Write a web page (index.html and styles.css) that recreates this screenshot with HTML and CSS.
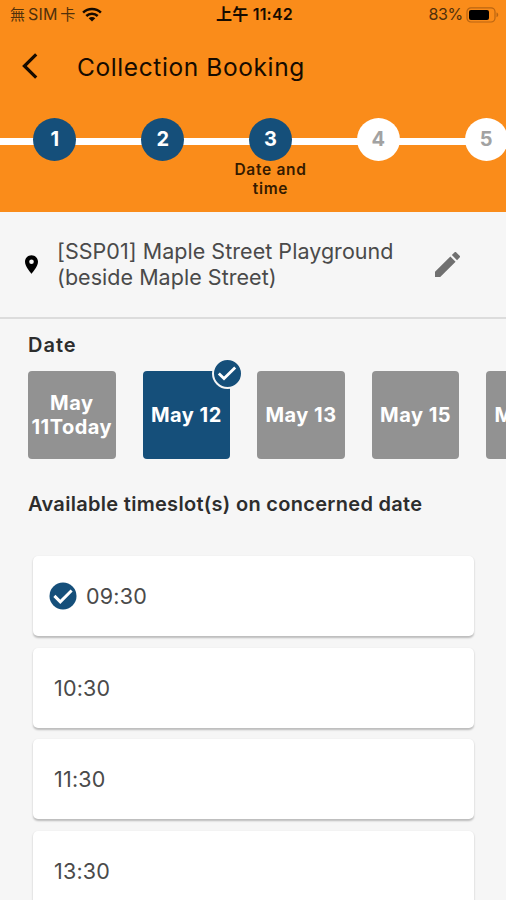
FILE: index.html
```html
<!DOCTYPE html>
<html lang="en">
<head>
<meta charset="utf-8">
<meta name="viewport" content="width=device-width, initial-scale=1">
<title>Collection Booking</title>
<link rel="stylesheet" href="styles.css">
</head>
<body>
<div class="screen">
  <header class="header">
    <div class="status">
      <div class="status-left">
        <span class="carrier">無<span class="sim">SIM</span>卡</span>
        <svg class="wifi" viewBox="0 0 20 15" width="20" height="15" fill="none" stroke="#160b00" stroke-width="2.5">
          <path d="M1.1 5.6A12.7 12.7 0 0 1 18.9 5.6"/>
          <path d="M4.3 9A8.1 8.1 0 0 1 15.7 9"/>
          <path d="M10 14.4L6.7 11.3A4.7 4.7 0 0 1 13.3 11.3Z" fill="#160b00" stroke="none"/>
        </svg>
      </div>
      <div class="status-time">上午 11:42</div>
      <div class="status-right">
        <span class="percent">83%</span>
        <svg class="battery" viewBox="0 0 33 16" width="33" height="16">
          <rect x="1" y=".8" width="28" height="14.2" rx="4" fill="none" stroke="#b96512" stroke-width="1.2"/>
          <rect x="3" y="2.9" width="20" height="10" rx="2" fill="#000"/>
          <path d="M30.5 5.6C32.8 6.3 32.8 9.5 30.5 10.2Z" fill="#b96512"/>
        </svg>
      </div>
    </div>
    <div class="titlebar">
      <svg class="back" viewBox="0 0 16 26" width="16" height="26" fill="none" stroke="#160b00" stroke-width="3.2"><path d="M14.2 1.4L2.4 13L14.2 24.6"/></svg>
      <h1 class="title">Collection Booking</h1>
    </div>
    <ol class="steps">
      <li class="step done"><span class="dot">1</span></li>
      <li class="step done"><span class="dot">2</span></li>
      <li class="step done"><span class="dot">3</span><span class="label">Date and time</span></li>
      <li class="step"><span class="dot">4</span></li>
      <li class="step"><span class="dot">5</span></li>
    </ol>
  </header>

  <section class="place">
    <svg class="pin" viewBox="5 2 14 20" width="13" height="19"><path d="M12 2C8.13 2 5 5.13 5 9c0 5.25 7 13 7 13s7-7.75 7-13c0-3.87-3.13-7-7-7zm0 9.5a2.5 2.5 0 0 1 0-5 2.5 2.5 0 0 1 0 5z"/></svg>
    <p class="address">[SSP01] Maple Street Playground<br>(beside Maple Street)</p>
    <svg class="edit" viewBox="3 3 18 18" width="25" height="25" fill="#707070"><path d="M3 17.25V21h3.75L17.81 9.94l-3.75-3.75L3 17.25zM20.71 7.04a1 1 0 0 0 0-1.41l-2.34-2.34a1 1 0 0 0-1.41 0l-1.83 1.83 3.75 3.75 1.83-1.83z"/></svg>
  </section>

  <section class="dates">
    <h2 class="heading date-heading">Date</h2>
    <div class="date-row">
      <div class="date">May<br>11Today</div>
      <div class="date selected">May 12
        <span class="badge"><svg viewBox="0 0 26 26" width="26" height="26" fill="none" stroke="#fff" stroke-width="2.8"><path d="M4.8 13.4L10 18.6L21.2 7.4"/></svg></span>
      </div>
      <div class="date">May 13</div>
      <div class="date">May 15</div>
      <div class="date">May 16</div>
    </div>
  </section>

  <section class="times">
    <h2 class="heading slot-heading">Available timeslot(s) on concerned date</h2>
    <ul class="slots">
      <li class="slot chosen">
        <svg class="check" viewBox="0 0 28 28" width="28" height="28"><circle cx="14" cy="14" r="13.5" fill="#154f7a"/><path d="M5.4 13.9L11.3 19.8L22.6 8.5" fill="none" stroke="#fff" stroke-width="3"/></svg>
        <span>09:30</span>
      </li>
      <li class="slot">10:30</li>
      <li class="slot">11:30</li>
      <li class="slot">13:30</li>
    </ul>
  </section>
</div>
</body>
</html>
```
FILE: styles.css
```css
* { box-sizing: border-box; }
body {
  margin: 0;
  background: #fff;
  font-family: Inter, "Noto Sans CJK TC", sans-serif;
  color: #2d2d2d;
}
h1, h2, p, ul, ol { margin: 0; padding: 0; list-style: none; }
svg { display: block; flex: none; }
.screen {
  width: 506px;
  height: 900px;
  overflow: hidden;
  background: #f6f6f6;
}
.header {
  height: 211.5px;
  background: #fa8c1a;
  color: #160b00;
}
.status {
  display: grid;
  grid-template-columns: 1fr auto 1fr;
  align-items: center;
  height: 29px;
  padding: 0 7px 0 10px;
  font-size: 16px;
  line-height: 29px;
  white-space: nowrap;
}
.status-left { display: flex; align-items: center; gap: 7px; color: #50300b; }
.carrier { font-size: 15px; }
.sim { margin: 0 2.5px 0 3px; font-size: 16px; letter-spacing: .2px; }
.status-time { font-weight: 600; font-size: 16px; letter-spacing: .2px; }
.status-right { display: flex; align-items: center; justify-content: flex-end; gap: 3px; color: #50300b; }
.percent { letter-spacing: -.3px; }
.titlebar {
  display: flex;
  align-items: center;
  height: 74px;
  padding-left: 22px;
}
.title {
  margin: 1px 0 0 39px;
  font-size: 24.5px;
  font-weight: 400;
  letter-spacing: .6px;
  line-height: 32px;
  white-space: nowrap;
}
.steps {
  display: flex;
  width: 540px;
  padding-top: 14.5px;
  margin-left: 1px;
}
.step {
  flex: 0 0 107.8px;
  display: flex;
  flex-direction: column;
  align-items: center;
  background: linear-gradient(#fff, #fff) 0 20px / 100% 7px no-repeat;
}
.step:first-child { margin-left: -1px; padding-left: 1px; flex-basis: 108.8px; }
.dot {
  width: 43px;
  height: 43px;
  border-radius: 50%;
  background: #fff;
  color: #a2a2a2;
  font-size: 20px;
  font-weight: 700;
  line-height: 43px;
  text-align: center;
}
.done .dot { background: #154f7a; color: #fff; }
.label {
  width: 84px;
  margin-top: .5px;
  font-size: 15.5px;
  font-weight: 600;
  line-height: 18.5px;
  letter-spacing: .7px;
  text-align: center;
  color: #351b00;
}
.place {
  display: flex;
  align-items: center;
  height: 107.5px;
  padding: 0 46px 0 25px;
  border-bottom: 2px solid #dcdcdc;
}
.address {
  margin: 1px 0 0 19px;
  font-size: 21.5px;
  line-height: 25.5px;
  letter-spacing: .04px;
  color: #4a4a4a;
  white-space: nowrap;
}
.edit { margin-left: auto; }
.heading { font-size: 20px; font-weight: 600; line-height: 26px; white-space: nowrap; }
.date-heading { letter-spacing: 1px; }
.slot-heading { letter-spacing: .3px; }
.dates { padding: 13px 0 0 28px; }
.date-row { display: flex; gap: 27px; margin-top: 13px; width: 560px; }
.date {
  position: relative;
  flex: 0 0 87.6px;
  height: 88px;
  display: grid;
  place-items: center;
  align-content: center;
  border-radius: 4px;
  background: #929292;
  color: #fff;
  font-size: 20px;
  font-weight: 700;
  line-height: 24px;
  letter-spacing: .5px;
  text-align: center;
  white-space: nowrap;
}
.date.selected { background: #154f7a; }
.badge {
  position: absolute;
  top: -13px;
  right: -13px;
  width: 31px;
  height: 31px;
  border: 2.5px solid #f6f6f6;
  border-radius: 50%;
  background: #154f7a;
}
.times { padding: 32px 32px 0 28px; }
.slots { display: grid; gap: 11.5px; margin: 39px 0 0 5px; }
.slot {
  display: flex;
  align-items: center;
  height: 80px;
  padding-left: 21px;
  border-radius: 5px;
  background: #fff;
  box-shadow: 0 1.5px 2px rgba(0, 0, 0, .24);
  font-size: 21.5px;
  letter-spacing: .2px;
  color: #4a4a4a;
}
.slot.chosen { padding-left: 16px; }
.check { margin-right: 9px; }
```
